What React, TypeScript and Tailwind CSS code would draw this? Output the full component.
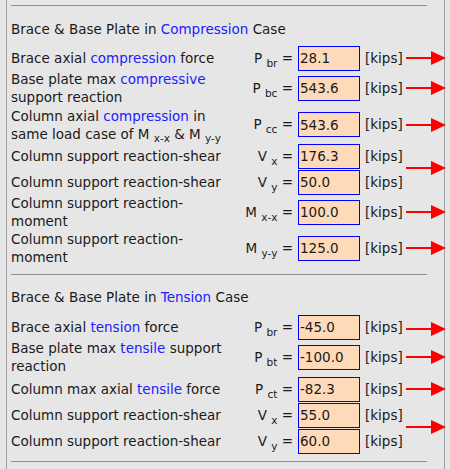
import type { ReactNode } from 'react';

const font = { fontFamily: '"DejaVu Sans", Verdana, sans-serif' };

function Arrow({ shift = '' }: { shift?: string }) {
  return (
    <svg width="40" height="14" viewBox="0 0 40 14" className={`ml-[3px] shrink-0 ${shift}`}>
      <line x1="0" y1="7" x2="27" y2="7" stroke="#ff0000" strokeWidth="2" />
      <polygon points="25,0 40,7 25,14" fill="#ff0000" />
    </svg>
  );
}

function Sym({ base, sub }: { base: string; sub: string }) {
  return (
    <span className="whitespace-nowrap">
      {base} <sub className="text-[10.5px] bottom-[-4px]">{sub}</sub> =
    </span>
  );
}

function Blue({ children }: { children: ReactNode }) {
  return <span className="text-[#2020ff]">{children}</span>;
}

type RowProps = {
  h: string;
  label: ReactNode;
  sym: ReactNode;
  value: string;
  arrow?: boolean;
  shift?: string;
};

function Row({ h, label, sym, value, arrow = true, shift = '' }: RowProps) {
  return (
    <div className={`flex items-center ${h}`}>
      <div className="w-[222px] shrink-0 leading-[18px]">{label}</div>
      <div className="w-[60px] shrink-0 text-right">{sym}</div>
      <input
        readOnly
        value={value}
        className="ml-[5px] w-[62px] h-[25px] shrink-0 border border-[#0000ff] bg-[#ffdab9] pl-[1px] text-[13.5px] text-[#1a1a1a] outline-none"
        style={font}
      />
      <span className="ml-[5px] shrink-0">[kips]</span>
      {arrow ? <Arrow shift={shift} /> : null}
    </div>
  );
}

export default function App() {
  return (
    <div className="w-[450px] h-[469px] bg-[#e6e6e6] overflow-hidden text-[13.5px] text-[#1a1a1a]" style={font}>
      <div className="ml-[6px] w-[439px] h-full border-x border-[#a0a0a0] pl-[4px]">
        <div className="h-[5px]" />
        <div className="h-px w-[416px] bg-[#8c8c8c]" />

        <div className="mt-[14px] leading-[18px]">
          Brace &amp; Base Plate in <Blue>Compression</Blue> Case
        </div>

        <div className="mt-[8px]">
          <Row
            h="h-[24px]"
            label={<>Brace axial <Blue>compression</Blue> force</>}
            sym={<Sym base="P" sub="br" />}
            value="28.1"
          />
          <Row
            h="h-[36px]"
            label={<>Base plate max <Blue>compressive</Blue> support reaction</>}
            sym={<Sym base="P" sub="bc" />}
            value="543.6"
          />
          <Row
            h="h-[37px]"
            label={
              <>
                Column axial <Blue>compression</Blue> in same load case of M{' '}
                <sub className="text-[10.5px] bottom-[-3px]">x-x</sub> &amp; M{' '}
                <sub className="text-[10.5px] bottom-[-3px]">y-y</sub>
              </>
            }
            sym={<Sym base="P" sub="cc" />}
            value="543.6"
          />
          <Row
            h="h-[26px]"
            label="Column support reaction-shear"
            sym={<Sym base="V" sub="x" />}
            value="176.3"
            shift="translate-y-[12px]"
          />
          <Row
            h="h-[26px]"
            label="Column support reaction-shear"
            sym={<Sym base="V" sub="y" />}
            value="50.0"
            arrow={false}
          />
          <Row
            h="h-[34px]"
            label="Column support reaction-moment"
            sym={<Sym base="M" sub="x-x" />}
            value="100.0"
          />
          <Row
            h="h-[38px]"
            label="Column support reaction-moment"
            sym={<Sym base="M" sub="y-y" />}
            value="125.0"
          />
        </div>

        <div className="mt-[7px] h-px w-[416px] bg-[#8c8c8c]" />

        <div className="mt-[13px] leading-[18px]">
          Brace &amp; Base Plate in <Blue>Tension</Blue> Case
        </div>

        <div className="mt-[9px]">
          <Row
            h="h-[24px]"
            label={<>Brace axial <Blue>tension</Blue> force</>}
            sym={<Sym base="P" sub="br" />}
            value="-45.0"
            shift="translate-y-[2px]"
          />
          <Row
            h="h-[36px]"
            label={<>Base plate max <Blue>tensile</Blue> support reaction</>}
            sym={<Sym base="P" sub="bt" />}
            value="-100.0"
          />
          <Row
            h="h-[28px]"
            label={<>Column max axial <Blue>tensile</Blue> force</>}
            sym={<Sym base="P" sub="ct" />}
            value="-82.3"
          />
          <Row
            h="h-[24px]"
            label="Column support reaction-shear"
            sym={<Sym base="V" sub="x" />}
            value="55.0"
            shift="translate-y-[12px]"
          />
          <Row
            h="h-[28px]"
            label="Column support reaction-shear"
            sym={<Sym base="V" sub="y" />}
            value="60.0"
            arrow={false}
          />
        </div>

        <div className="mt-[6px] h-px w-[416px] bg-[#8c8c8c]" />
      </div>
    </div>
  );
}
